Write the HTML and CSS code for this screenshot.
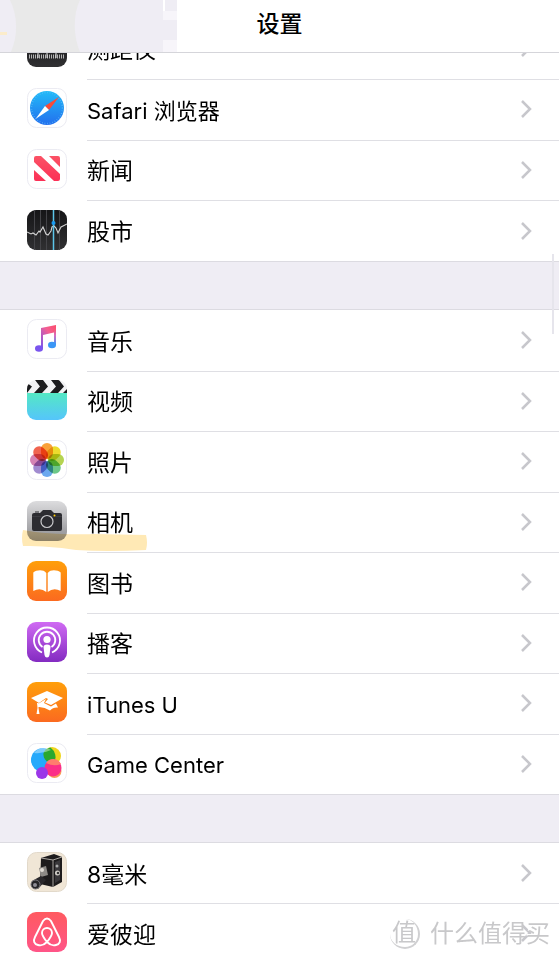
FILE: index.html
```html
<!DOCTYPE html>
<html lang="zh-CN">

<head>
  <meta charset="utf-8" />
  <title>设置</title>
  <meta name="viewport" content="width=device-width, initial-scale=1" />
  <link rel="stylesheet" href="styles.css">
</head>

<body>
  <!-- gradients and shapes shared by the icons -->
  <svg class="defs" aria-hidden="true">
    <defs>
      <linearGradient id="g-black" x2="0" y2="1"><stop stop-color="#151517" /><stop offset="1" stop-color="#303032" /></linearGradient>
      <linearGradient id="g-blue" x2="0" y2="1"><stop stop-color="#22bbf8" /><stop offset="1" stop-color="#236fee" /></linearGradient>
      <linearGradient id="g-news" x2="0" y2="1"><stop stop-color="#fb5265" /><stop offset="1" stop-color="#fb3056" /></linearGradient>
      <linearGradient id="g-music" x1="1" y1="0" x2="0" y2="1"><stop stop-color="#fb4d6b" /><stop offset=".4" stop-color="#f45f92" /><stop offset="1" stop-color="#7a55ee" /></linearGradient>
      <linearGradient id="g-stem" x2="0" y2="1"><stop stop-color="#f9566f" /><stop offset=".4" stop-color="#d86cc0" /><stop offset="1" stop-color="#3a96f6" /></linearGradient>
      <linearGradient id="g-video" x2="0" y2="1"><stop stop-color="#54e8c4" /><stop offset="1" stop-color="#55c5fb" /></linearGradient>
      <linearGradient id="g-camera" x2="0" y2="1"><stop stop-color="#dcdcde" /><stop offset="1" stop-color="#8e8e92" /></linearGradient>
      <linearGradient id="g-orange" x2="0" y2="1"><stop stop-color="#ff9f0a" /><stop offset="1" stop-color="#fb6a20" /></linearGradient>
      <linearGradient id="g-purple" x2="0" y2="1"><stop stop-color="#d06af3" /><stop offset="1" stop-color="#832bc1" /></linearGradient>
      <linearGradient id="g-pink" x2="0" y2="1"><stop stop-color="#ff5a60" /><stop offset="1" stop-color="#ff5588" /></linearGradient>
      <clipPath id="tile"><rect width="40" height="40" rx="9" /></clipPath>
      <symbol id="chevron" viewBox="0 0 12 20"><path d="M2 2l8 8-8 8" fill="none" stroke="#c7c7cc" stroke-width="2.5" /></symbol>
    </defs>
  </svg>

  <div class="page">
    <header class="navbar">
      <svg class="smudge" viewBox="0 0 177 52" aria-hidden="true">
        <path fill="#efedf4" d="M0 0h163v52H0z" />
        <path fill="#e9e9e9" d="M10 0h70c-7 14-7 36 0 52H11c7-16 7-36-1-52z" />
        <path fill="#f7f5fa" d="M163 11h14v9h-14zM163 40h14v12h-14z" />
        <path fill="#efedf4" d="M165 0h12v11h-12zM163 20h14v20h-14z" />
        <path fill="#fbeccb" d="M0 32h7v3H0z" />
      </svg>
      <h1>设置</h1>
    </header>

    <main class="content">
      <ul class="group group-first">
        <li><a class="row" href="#">
          <svg class="icon" viewBox="0 0 40 40" aria-hidden="true">
            <rect width="40" height="40" rx="9" fill="url(#g-black)" />
            <path d="M2 29.500h36" stroke="#b4b4b4" stroke-width="4" stroke-dasharray="1 1" />
            <path d="M11 24v7M20 24v7M29 24v7" stroke="#ddd" />
          </svg>
          <span class="label">测距仪</span>
          <svg class="chevron" aria-hidden="true"><use href="#chevron" /></svg>
        </a></li>
        <li><a class="row" href="#">
          <svg class="icon" viewBox="0 0 40 40" aria-hidden="true">
            <rect x=".5" y=".5" width="39" height="39" rx="9" fill="#fff" stroke="#ebebf2" />
            <circle cx="20" cy="20" r="17" fill="url(#g-blue)" />
            <circle cx="20" cy="20" r="15.500" fill="none" stroke="#5dbdf8" stroke-width="1.500" stroke-dasharray=".6 2" />
            <path d="M32 9L18 18l4 4z" fill="#fb4a38" />
            <path d="M8.500 31L18 18l4 4z" fill="#fff" />
          </svg>
          <span class="label label-latin">Safari 浏览器</span>
          <svg class="chevron" aria-hidden="true"><use href="#chevron" /></svg>
        </a></li>
        <li><a class="row" href="#">
          <svg class="icon" viewBox="0 0 40 40" aria-hidden="true">
            <rect x=".5" y=".5" width="39" height="39" rx="9" fill="#fff" stroke="#ebebf2" />
            <path d="M9 7h5l19 18v5q0 2-2 2h-4L7 13V9q0-2 2-2zM22 7h9q2 0 2 2v9zM7 21l12 11H9q-2 0-2-2z" fill="url(#g-news)" />
          </svg>
          <span class="label">新闻</span>
          <svg class="chevron" aria-hidden="true"><use href="#chevron" /></svg>
        </a></li>
        <li><a class="row" href="#">
          <svg class="icon" viewBox="0 0 40 40" aria-hidden="true">
            <rect width="40" height="40" rx="9" fill="url(#g-black)" />
            <path d="M7.500 0v40M13.500 0v40M19.500 0v40M32.500 0v40" stroke="#444448" />
            <path d="M0 22l4 2 2-1 3 2 3-4 1 1 3-5 3 7 2 1 3-4 1-4 2-1 2 2 2 5 3-6 2-1 4-2" fill="none" stroke="#d5d5d5" stroke-width="1.100" />
            <path d="M26.500 0v40" stroke="#5cc5e9" stroke-width="1.500" />
            <circle cx="26.500" cy="13" r="2" fill="#199bf2" />
          </svg>
          <span class="label">股市</span>
          <svg class="chevron" aria-hidden="true"><use href="#chevron" /></svg>
        </a></li>
      </ul>

      <ul class="group group-media">
        <li><a class="row" href="#">
          <svg class="icon" viewBox="0 0 40 40" aria-hidden="true">
            <rect x=".5" y=".5" width="39" height="39" rx="9" fill="#fff" stroke="#ebebf2" />
            <path d="M14 9l15-3v7l-13 3v13h-2z" fill="url(#g-music)" />
            <path d="M27 10h2v16h-2z" fill="url(#g-stem)" />
            <ellipse cx="12" cy="29.500" rx="4" ry="3.300" fill="#7a55ee" />
            <ellipse cx="25" cy="26" rx="4" ry="3.300" fill="#3a96f6" />
          </svg>
          <span class="label">音乐</span>
          <svg class="chevron" aria-hidden="true"><use href="#chevron" /></svg>
        </a></li>
        <li><a class="row" href="#">
          <svg class="icon" viewBox="0 0 40 40" aria-hidden="true">
            <g clip-path="url(#tile)">
              <path fill="#f2f2f4" d="M0 0h40v13H0z" />
              <path fill="url(#g-video)" d="M0 13h40v27H0z" />
              <path fill="#1c1c1e" d="M0 3l5 3.500L0 13zM8 0h8l5 6.500-6 6.500H7l6-6.500zM24 0h8l5 6.500-6 6.500h-8l6-6.500zM40 9v4h-4z" />
            </g>
          </svg>
          <span class="label">视频</span>
          <svg class="chevron" aria-hidden="true"><use href="#chevron" /></svg>
        </a></li>
        <li><a class="row" href="#">
          <svg class="icon" viewBox="0 0 40 40" aria-hidden="true">
            <rect x=".5" y=".5" width="39" height="39" rx="9" fill="#fff" stroke="#ebebf2" />
            <g class="petals">
              <rect x="14" y="3" width="12" height="16" rx="6" fill="#f9a13a" />
              <rect x="14" y="3" width="12" height="16" rx="6" fill="#ecdc2e" transform="rotate(45 20 20)" />
              <rect x="14" y="3" width="12" height="16" rx="6" fill="#b5d452" transform="rotate(90 20 20)" />
              <rect x="14" y="3" width="12" height="16" rx="6" fill="#6cc788" transform="rotate(135 20 20)" />
              <rect x="14" y="3" width="12" height="16" rx="6" fill="#6ba8ef" transform="rotate(180 20 20)" />
              <rect x="14" y="3" width="12" height="16" rx="6" fill="#a18bd0" transform="rotate(225 20 20)" />
              <rect x="14" y="3" width="12" height="16" rx="6" fill="#d583b4" transform="rotate(270 20 20)" />
              <rect x="14" y="3" width="12" height="16" rx="6" fill="#f06450" transform="rotate(315 20 20)" />
            </g>
          </svg>
          <span class="label">照片</span>
          <svg class="chevron" aria-hidden="true"><use href="#chevron" /></svg>
        </a></li>
        <li><a class="row" href="#">
          <svg class="icon" viewBox="0 0 40 40" aria-hidden="true">
            <rect width="40" height="40" rx="9" fill="url(#g-camera)" />
            <path d="M7 12h6l3-3h8l3 3h6q2 0 2 2v14q0 2-2 2H7q-2 0-2-2V14q0-2 2-2zM8 10.500h4v1H8z" fill="#2c2c31" />
            <path d="M5 15.500h30" stroke="#3b3b40" />
            <circle cx="20" cy="20.500" r="7.500" fill="#2c2c31" />
            <circle cx="20" cy="20.500" r="6" fill="none" stroke="#c9c9cc" stroke-width="1.200" />
            <circle cx="27.500" cy="14.500" r="1" fill="#fc0" />
          </svg>
          <span class="label">相机</span>
          <svg class="chevron" aria-hidden="true"><use href="#chevron" /></svg>
          <svg class="marker" viewBox="0 0 125 22" aria-hidden="true"><path d="M1 0c20 4 50 5 70 4l53 1q2 8 0 15-40 2-70 0C34 17 20 16 1 16q-2-8 0-16z" fill="#ffe9b5" /></svg>
        </a></li>
        <li><a class="row" href="#">
          <svg class="icon" viewBox="0 0 40 40" aria-hidden="true">
            <rect width="40" height="40" rx="9" fill="url(#g-orange)" />
            <path d="M19.300 12c-3-4-10-3-13-.500V30q7-4 13 1zM20.700 12c3-4 10-3 13-.500V30q-7-4-13 1z" fill="#fff" />
          </svg>
          <span class="label">图书</span>
          <svg class="chevron" aria-hidden="true"><use href="#chevron" /></svg>
        </a></li>
        <li><a class="row" href="#">
          <svg class="icon" viewBox="0 0 40 40" aria-hidden="true">
            <rect width="40" height="40" rx="9" fill="url(#g-purple)" />
            <path d="M15 30.500a13 13 0 1 1 10 0M15.500 25a8.300 8.300 0 1 1 9 0" fill="none" stroke="#fff" stroke-width="1.800" />
            <circle cx="20" cy="17.500" r="3.600" fill="#fff" />
            <path d="M16.500 25q0-2.500 3.500-2.500t3.500 2.500l-1 8q-.5 2.500-2.500 2.500T17.500 33z" fill="#fff" />
          </svg>
          <span class="label">播客</span>
          <svg class="chevron" aria-hidden="true"><use href="#chevron" /></svg>
        </a></li>
        <li><a class="row" href="#">
          <svg class="icon" viewBox="0 0 40 40" aria-hidden="true">
            <rect width="40" height="40" rx="9" fill="url(#g-orange)" />
            <path d="M20 9l16 7-12 7-6-2.500 3-3.500-2-1-7 5-8-5z" fill="#fff" />
            <path d="M14 20l5-3-2 4 7 3.500 5-3 2 4q-5-.5-8 3-6-4-12-3.500V22zM10 21h1.500v5l1 6h-3l1-6z" fill="#fff" />
          </svg>
          <span class="label label-latin">iTunes U</span>
          <svg class="chevron" aria-hidden="true"><use href="#chevron" /></svg>
        </a></li>
        <li><a class="row" href="#">
          <svg class="icon" viewBox="0 0 40 40" aria-hidden="true">
            <rect x=".5" y=".5" width="39" height="39" rx="9" fill="#fff" stroke="#ebebf2" />
            <circle cx="25" cy="13" r="9" fill="#efd51d" />
            <circle cx="16" cy="17" r="12" fill="#25a9fb" />
            <path d="M16.500 10a9 9 0 0 1 7-5.500A12 12 0 0 1 27 20a9 9 0 0 1-10.500-10z" fill="#2aa82e" />
            <path d="M7 10a12 12 0 0 1 17-3q-8 4-17 3z" fill="#fff" opacity=".4" />
            <circle cx="27.500" cy="28" r="7" fill="#f99a5a" />
            <circle cx="26" cy="25" r="8.500" fill="#fb2f87" />
            <path d="M19 20a8.500 8.500 0 0 1 15 1q-7 3-15-1z" fill="#ff7d6e" />
            <circle cx="15" cy="30" r="6" fill="#9b37e8" />
          </svg>
          <span class="label label-latin">Game Center</span>
          <svg class="chevron" aria-hidden="true"><use href="#chevron" /></svg>
        </a></li>
      </ul>

      <ul class="group">
        <li><a class="row" href="#">
          <svg class="icon" viewBox="0 0 40 40" aria-hidden="true">
            <rect x=".5" y=".5" width="39" height="39" rx="9" fill="#f0e6d6" stroke="#e2d9ca" />
            <path d="M14 6l13-4 8 3v25l-9 5-13-3z" fill="#1d1b1c" />
            <path d="M14 6l12 2v27M26 8l9-3" fill="none" stroke="#a9a5a0" />
            <path d="M28 10l5-2v20l-5 3z" fill="#39373a" />
            <circle cx="30" cy="14" r="1.500" fill="#aaa" />
            <circle cx="30.500" cy="21" r="2.500" fill="#d6d2cc" />
            <circle cx="31" cy="21" r="1.300" fill="#333" />
            <path d="M12 16l7-2 2 9-7 2z" fill="#8d8a86" />
            <circle cx="15" cy="18" r="2" fill="#e1ddd6" />
            <path d="M5 29l9-5 5 4-8 9z" fill="#2a282b" />
            <circle cx="8.500" cy="32.500" r="4.500" fill="#252427" stroke="#77747a" />
            <circle cx="8" cy="33" r="2" fill="#8d8b94" />
          </svg>
          <span class="label">8毫米</span>
          <svg class="chevron" aria-hidden="true"><use href="#chevron" /></svg>
        </a></li>
        <li><a class="row" href="#">
          <svg class="icon" viewBox="0 0 40 40" aria-hidden="true">
            <rect width="40" height="40" rx="9" fill="url(#g-pink)" />
            <path d="M20 30c-4-5-5-7-5-9a5 5 0 0 1 10 0c0 2-1 4-5 9-3 3-6 4-9 3-4-1-5-4-3-8l8-16q4-5 8 0l8 16c2 4 1 7-3 8-3 1-6 0-9-3z" fill="none" stroke="#fff" stroke-width="1.900" />
          </svg>
          <span class="label">爱彼迎</span>
          <svg class="chevron" aria-hidden="true"><use href="#chevron" /></svg>
        </a></li>
      </ul>
    </main>

    <div class="scrollbar"></div>
    <div class="watermark"><span class="seal">值</span><span>什么值得买</span></div>
  </div>
</body>

</html>
```
FILE: styles.css
```css
* {
  box-sizing: border-box;
  padding: 0;
  margin: 0;
}

body {
  font-family: Inter, "Noto Sans CJK SC", sans-serif;
  color: #000;
  background-color: #efedf4;
}

.defs {
  position: absolute;
  width: 0;
  height: 0;
}

.page {
  position: relative;
  height: 100vh;
  overflow: hidden;
}

.navbar {
  position: relative;
  z-index: 1;
  height: 53px;
  display: flex;
  align-items: center;
  justify-content: center;
  padding-bottom: 4px;
  background-color: #fff;
  border-bottom: 1px solid #d5d5da;
}

h1 {
  font-size: 23px;
  line-height: 32px;
  font-weight: 500;
}

.smudge {
  position: absolute;
  left: 0;
  top: 0;
  width: 177px;
  height: 52px;
}

.content {
  margin-top: -36px;
}

/* Groups */
.group {
  display: grid;
  grid-auto-rows: 1fr;
  list-style: none;
  margin-bottom: 47px;
  background-color: #fff;
  border-top: 1px solid #dcdbe1;
  border-bottom: 1px solid #dcdbe1;
}

.group-first {
  min-height: 245px;
}

.group-media {
  min-height: 486px;
}

.row {
  position: relative;
  display: flex;
  align-items: center;
  height: 100%;
  min-height: 60px;
  padding: 0 27px;
  color: #000;
  text-decoration: none;
}

.icon {
  flex: none;
  width: 40px;
  height: 40px;
  margin-right: 20px;
  margin-bottom: 2px;
}

.label {
  flex: 1;
  font-size: 23px;
  line-height: 32px;
  padding-top: 3px;
}

.label-latin {
  font-size: 22px;
}

.chevron {
  flex: none;
  width: 12px;
  height: 20px;
}

/* inset line between two rows */
li + li .row::before {
  content: "";
  position: absolute;
  left: 87px;
  right: 0;
  top: 0;
  height: 1px;
  background-color: #dfdfe4;
}

.petals rect {
  mix-blend-mode: multiply;
}

.marker {
  position: absolute;
  left: 22px;
  bottom: 0;
  width: 125px;
  height: 22px;
  mix-blend-mode: multiply;
}

/* Overlays */
.scrollbar {
  position: absolute;
  right: 5px;
  top: 254px;
  width: 2px;
  height: 80px;
  background-color: #e6e5ec;
}

.watermark {
  position: absolute;
  right: 9px;
  bottom: 8px;
  display: flex;
  align-items: center;
  gap: 10px;
  font-size: 24px;
  line-height: 36px;
  color: #c8c8ca;
  text-shadow: -1px -1px 0 #fff;
}

.seal {
  width: 30px;
  height: 30px;
  line-height: 28px;
  text-align: center;
  border-right: 2px solid #d0d0d2;
  border-bottom: 2px solid #d0d0d2;
  border-radius: 50%;
}
```
